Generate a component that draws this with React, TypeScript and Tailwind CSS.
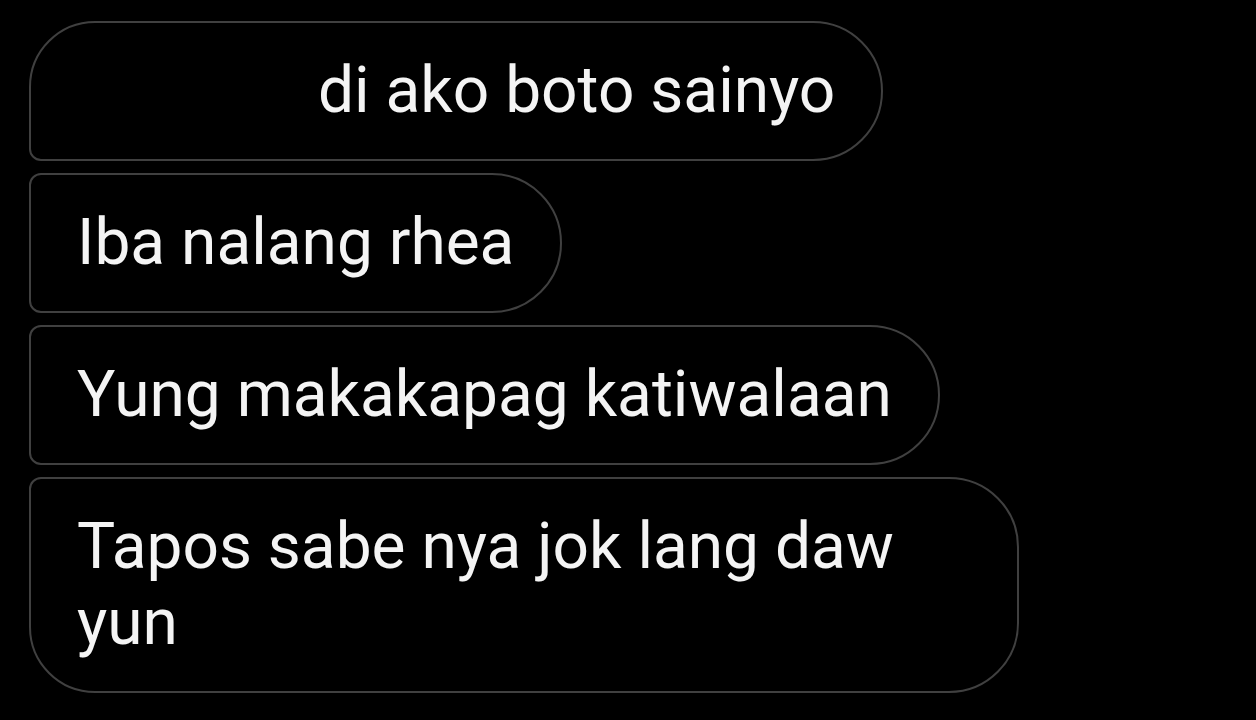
export default function App() {
  const base =
    'border-2 border-[#404040] rounded-r-[70px] py-[30px] pr-[46px] text-[64px] leading-[76px] text-[#f4f4f4] max-w-[990px]';

  return (
    <div
      className="min-h-screen bg-black pt-[21px] pl-[29px] flex flex-col items-start gap-[12px]"
      style={{ fontFamily: 'Roboto, "Noto Sans", sans-serif' }}
    >
      <div className={`${base} rounded-tl-[66px] rounded-bl-[12px] pl-[287px]`}>di ako boto sainyo</div>
      <div className={`${base} rounded-l-[12px] pl-[46px]`}>Iba nalang rhea</div>
      <div className={`${base} rounded-l-[12px] pl-[46px]`}>Yung makakapag katiwalaan</div>
      <div className={`${base} rounded-tl-[12px] rounded-bl-[66px] pl-[46px]`}>
        Tapos sabe nya jok lang daw yun
      </div>
    </div>
  );
}
